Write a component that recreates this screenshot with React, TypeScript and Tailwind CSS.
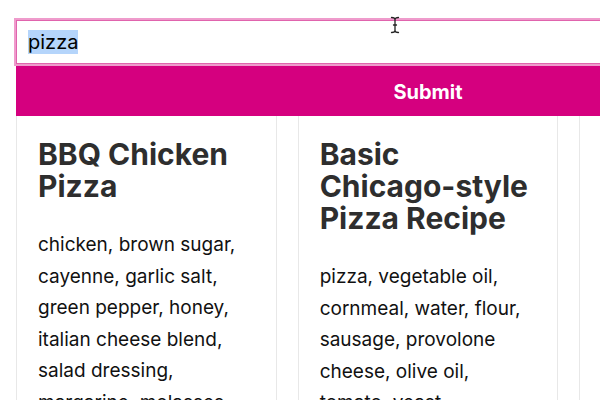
import React from 'react';

type Recipe = {
  title: string;
  ingredients: string;
};

const recipes: Recipe[] = [
  {
    title: 'BBQ Chicken Pizza',
    ingredients:
      'chicken, brown sugar, cayenne, garlic salt, green pepper, honey, italian cheese blend, salad dressing, margarine, molasses, onions, pizza dough',
  },
  {
    title: 'Basic Chicago-style Pizza Recipe',
    ingredients:
      'pizza, vegetable oil, cornmeal, water, flour, sausage, provolone cheese, olive oil, tomato, yeast, mozzarella cheese, salt',
  },
  {
    title: 'Mexican Pizza',
    ingredients: 'tortillas, refried beans, ground beef, salsa, cheddar cheese, tomato, green onion',
  },
];

// text caret shown over the search field
const IBeam: React.FC = () => (
  <svg width="10" height="18" viewBox="0 0 10 18" className="absolute left-[390px] top-[16px]">
    <path d="M1.5 1.5 Q5 1.5 5 3.5 Q5 1.5 8.5 1.5 M5 3.5 V14.5 M1.5 16.5 Q5 16.5 5 14.5 Q5 16.5 8.5 16.5 M3.5 9 H6.5" stroke="#222" strokeWidth="1.3" fill="none" strokeLinecap="round" />
  </svg>
);

const App: React.FC = () => {
  return (
    <div className="relative w-screen h-screen overflow-hidden bg-white" style={{ fontFamily: 'Inter, "Noto Sans", sans-serif' }}>
      <div className="w-[824px] ml-4 pt-5">
        {/* search form */}
        <div className="h-[44px] flex items-center pl-[11px] bg-white border border-[#e064ad] outline-2 outline-[#ef9bcc]">
          <span className="text-[20px] leading-[24px] text-black bg-[#b5d5fb]">pizza</span>
        </div>
        <button className="mt-[2px] w-full h-[50px] bg-[#d5007f] text-white text-[20px] font-bold flex items-center justify-center pt-[2px]">
          Submit
        </button>

        {/* results */}
        <div className="grid grid-cols-3 gap-[21px]">
          {recipes.map((r) => (
            <div key={r.title} className="border border-t-0 border-[#e8e8e8] px-[21px] pt-[22px] pb-6">
              <h2 className="text-[30px] leading-[32px] font-bold text-[#2e2e2e] mb-[27px]">{r.title}</h2>
              <p className="text-[19px] leading-[31.5px] text-[#111]">{r.ingredients}</p>
            </div>
          ))}
        </div>
      </div>
      <IBeam />
    </div>
  );
};

export default App;
